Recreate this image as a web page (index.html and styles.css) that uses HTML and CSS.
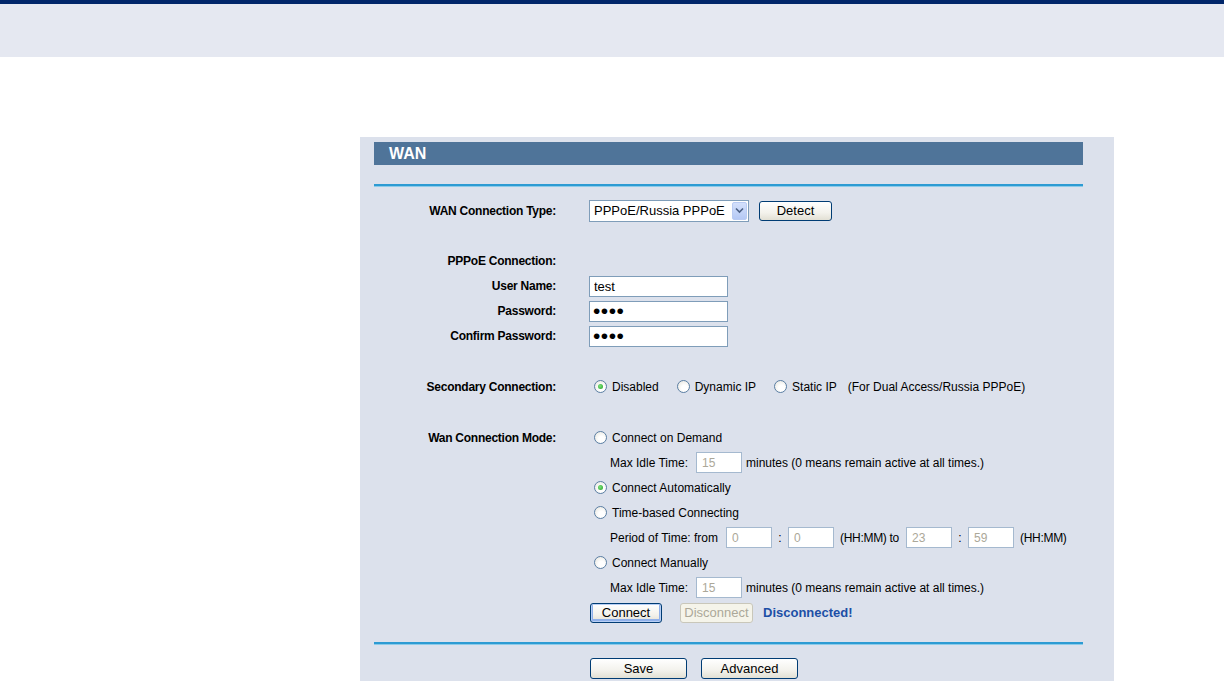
FILE: index.html
```html
<!DOCTYPE html>
<html lang="en">
<head>
    <meta charset="UTF-8">
    <title>WAN</title>
    <link rel="stylesheet" href="styles.css">
</head>
<body>
    <div class="topbar"></div>
    <div class="band"></div>
    <main class="panel">
        <div class="title">WAN</div>
        <div class="line first"></div>

        <div class="row">
            <label class="lbl">WAN Connection Type:</label>
            <div class="ctl">
                <div class="sel">
                    <select>
                        <option>PPPoE/Russia PPPoE</option>
                    </select>
                    <span class="arrow"><svg width="9" height="7" viewBox="0 0 9 7"><path d="M1 1.5 L4.5 5 L8 1.5" fill="none" stroke="#4d6185" stroke-width="1.6"/></svg></span>
                </div>
                <button class="btn detect">Detect</button>
            </div>
        </div>
        <div class="row blank"></div>
        <div class="row">
            <label class="lbl">PPPoE Connection:</label>
        </div>
        <div class="row">
            <label class="lbl">User Name:</label>
            <div class="ctl"><input class="text" type="text" value="test"></div>
        </div>
        <div class="row">
            <label class="lbl">Password:</label>
            <div class="ctl"><input class="text pwd" type="password" value="test"></div>
        </div>
        <div class="row">
            <label class="lbl">Confirm Password:</label>
            <div class="ctl"><input class="text pwd" type="password" value="test"></div>
        </div>
        <div class="row blank"></div>
        <div class="row">
            <label class="lbl">Secondary Connection:</label>
            <div class="ctl">
                <input type="radio" name="sec" checked><span class="opt">Disabled</span>
                <input type="radio" name="sec"><span class="opt">Dynamic IP</span>
                <input type="radio" name="sec"><span class="opt">Static IP</span>
                <span class="note">(For Dual Access/Russia PPPoE)</span>
            </div>
        </div>
        <div class="row blank"></div>
        <div class="row">
            <label class="lbl">Wan Connection Mode:</label>
            <div class="ctl">
                <input type="radio" name="mode"><span>Connect on Demand</span>
            </div>
        </div>
        <div class="row">
            <div class="sub">
                <span class="idle">Max Idle Time:</span>
                <input class="small" type="text" value="15" disabled>
                <span class="after">minutes (0 means remain active at all times.)</span>
            </div>
        </div>
        <div class="row">
            <div class="ctl">
                <input type="radio" name="mode" checked><span>Connect Automatically</span>
            </div>
        </div>
        <div class="row">
            <div class="ctl">
                <input type="radio" name="mode"><span>Time-based Connecting</span>
            </div>
        </div>
        <div class="row">
            <div class="sub">
                <span class="period">Period of Time: from</span>
                <input class="small" type="text" value="0" disabled>
                <span class="colon">:</span>
                <input class="small" type="text" value="0" disabled>
                <span class="hh">(HH:MM) to</span>
                <input class="small" type="text" value="23" disabled>
                <span class="colon">:</span>
                <input class="small" type="text" value="59" disabled>
                <span class="hh">(HH:MM)</span>
            </div>
        </div>
        <div class="row">
            <div class="ctl">
                <input type="radio" name="mode"><span>Connect Manually</span>
            </div>
        </div>
        <div class="row">
            <div class="sub">
                <span class="idle">Max Idle Time:</span>
                <input class="small" type="text" value="15" disabled>
                <span class="after">minutes (0 means remain active at all times.)</span>
            </div>
        </div>
        <div class="row">
            <div class="ctl">
                <button class="btn connect">Connect</button>
                <button class="btn" disabled>Disconnect</button>
                <span class="state">Disconnected!</span>
            </div>
        </div>

        <div class="line last"></div>
        <div class="row">
            <div class="ctl">
                <button class="btn wide">Save</button>
                <button class="btn wide">Advanced</button>
            </div>
        </div>
    </main>
</body>
</html>
```

FILE: styles.css
```css
* {
    margin: 0;
    padding: 0;
    box-sizing: border-box;
}
body {
    background: #fff;
    font-family: "Liberation Sans", Arial, sans-serif;
    font-size: 12px;
    color: #000;
}
button, input, select {
    font-family: "Liberation Sans", Arial, sans-serif;
    outline: none;
}
.topbar {
    height: 4px;
    background: #00266a;
}
.band {
    height: 53px;
    background: #e5e8f1;
}
.panel {
    width: 754px;
    height: 560px;
    margin: 80px 0 0 360px;
    padding: 5px 31px 0 14px;
    background: #dce1ec;
}
.title {
    height: 23px;
    padding-left: 15px;
    background: #4f7499;
    color: #fff;
    font-size: 16px;
    font-weight: bold;
    line-height: 23px;
}
.line {
    height: 3px;
    border-top: 2px solid #2d9bd3;
    border-bottom: 1px solid #8ccbe9;
}
.line.first {
    margin: 19px 0 11px;
}
.line.last {
    margin: 17px 0 11px;
}
.row {
    display: flex;
    align-items: center;
    height: 25px;
}
.row.blank {
    height: 25.7px;
}
.lbl {
    width: 216px;
    padding-right: 34px;
    text-align: right;
    font-weight: bold;
    letter-spacing: -0.25px;
    flex: none;
}
.ctl {
    display: flex;
    align-items: center;
}
.row > .ctl:first-child {
    margin-left: 216px;
}
.sub {
    display: flex;
    align-items: center;
    margin-left: 236px;
}

/* select */
.sel {
    display: flex;
    align-items: center;
    width: 160px;
    height: 22px;
    margin-left: -1px;
    border: 1px solid #7f9db9;
    background: #fff;
}
.sel select {
    flex: 1;
    height: 20px;
    border: 0;
    padding-left: 4px;
    font-size: 13px;
    background: #fff;
    appearance: none;
    -webkit-appearance: none;
}
.arrow {
    display: flex;
    align-items: center;
    justify-content: center;
    width: 15px;
    height: 18px;
    margin-right: 1px;
    border: 1px solid #b9cbf3;
    border-radius: 2px;
    background: linear-gradient(#d4e0fb, #b5c9f5);
}

/* buttons */
.btn {
    height: 21px;
    padding: 0;
    border: 1px solid #003c74;
    border-radius: 3px;
    background: linear-gradient(#ffffff, #f3f2ec 60%, #e2e0d4);
    font-size: 13px;
    color: #000;
}
.btn.detect {
    width: 73px;
    height: 20px;
    margin-left: 10px;
}
.btn.connect {
    width: 72px;
    height: 20px;
    box-shadow: inset 0 0 0 1px #b8cff5, inset 0 -1px 0 2px #8fb0ea;
}
.btn:disabled {
    width: 73px;
    height: 20px;
    margin-left: 18px;
    border-color: #c9c7ba;
    background: #f5f4ea;
    color: #aca899;
}
.btn.wide {
    width: 97px;
    margin-right: 14px;
}
.state {
    margin-left: 10px;
    font-size: 13px;
    font-weight: bold;
    color: #1c4fa6;
}

/* inputs */
.text {
    width: 139px;
    height: 21px;
    margin-left: -1px;
    padding-left: 4px;
    border: 1px solid #7f9db9;
    background: #fff;
    font-size: 13px;
    color: #000;
}
.pwd {
    padding-left: 3px;
    font-size: 21px;
    letter-spacing: 0.5px;
}
.small {
    width: 46px;
    height: 21px;
    padding-left: 5px;
    border: 1px solid #a5b9cf;
    background: #fff;
    font-size: 12px;
    color: #aca899;
}
.idle {
    width: 86px;
}
.after {
    margin-left: 4px;
}
.period {
    width: 116px;
}
.colon {
    width: 16px;
    text-align: center;
}
.hh {
    margin: 0 7px 0 6px;
    letter-spacing: -0.3px;
}

/* radios */
input[type="radio"] {
    appearance: none;
    -webkit-appearance: none;
    width: 13px;
    height: 13px;
    margin: 0 5px 0 4px;
    border: 1px solid #5a7ea3;
    border-radius: 50%;
    background: radial-gradient(circle at 60% 65%, #ffffff 30%, #e4e2da);
    position: relative;
    flex: none;
}
input[type="radio"]:checked::after {
    content: "";
    position: absolute;
    left: 3px;
    top: 3px;
    width: 5px;
    height: 5px;
    border-radius: 50%;
    background: radial-gradient(circle at 40% 40%, #7ee27e, #21a121);
}
.opt {
    margin-right: 14px;
}
.note {
    margin-left: -3px;
}
```
